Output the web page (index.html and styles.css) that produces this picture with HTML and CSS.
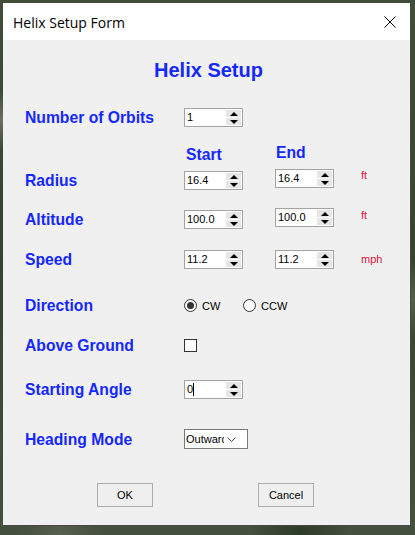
FILE: index.html
```html
<!DOCTYPE html>
<html lang="en">
<head>
    <meta charset="UTF-8">
    <meta name="viewport" content="width=device-width, initial-scale=1.0">
    <title>Helix Setup Form</title>
    <link rel="stylesheet" href="styles.css">
</head>
<body>
    <div class="window">
        <div class="titlebar">
            <span class="title">Helix Setup Form</span>
            <svg class="close" width="12" height="12" viewBox="0 0 12 12">
                <path d="M0.5 0.5 L11.5 11.5 M11.5 0.5 L0.5 11.5" stroke="#000" stroke-width="1" fill="none"/>
            </svg>
        </div>
        <div class="form">
            <h1 class="heading">Helix Setup</h1>

            <div class="row row-orbits">
                <span class="label">Number of Orbits</span>
                <div class="spin">
                    <span class="spin-value">1</span>
                    <span class="spin-btns"><span class="spin-up"></span><span class="spin-down"></span></span>
                </div>
            </div>

            <div class="row row-head">
                <span class="label"></span>
                <span class="col-head col-start">Start</span>
                <span class="col-head col-end">End</span>
            </div>

            <div class="row row-radius">
                <span class="label">Radius</span>
                <div class="col-start">
                    <div class="spin">
                        <span class="spin-value">16.4</span>
                        <span class="spin-btns"><span class="spin-up"></span><span class="spin-down"></span></span>
                    </div>
                </div>
                <div class="col-end up2">
                    <div class="spin">
                        <span class="spin-value">16.4</span>
                        <span class="spin-btns"><span class="spin-up"></span><span class="spin-down"></span></span>
                    </div>
                </div>
                <span class="unit up2">ft</span>
            </div>

            <div class="row row-altitude">
                <span class="label">Altitude</span>
                <div class="col-start">
                    <div class="spin">
                        <span class="spin-value">100.0</span>
                        <span class="spin-btns"><span class="spin-up"></span><span class="spin-down"></span></span>
                    </div>
                </div>
                <div class="col-end up2">
                    <div class="spin">
                        <span class="spin-value">100.0</span>
                        <span class="spin-btns"><span class="spin-up"></span><span class="spin-down"></span></span>
                    </div>
                </div>
                <span class="unit up1">ft</span>
            </div>

            <div class="row row-speed">
                <span class="label">Speed</span>
                <div class="col-start">
                    <div class="spin">
                        <span class="spin-value">11.2</span>
                        <span class="spin-btns"><span class="spin-up"></span><span class="spin-down"></span></span>
                    </div>
                </div>
                <div class="col-end">
                    <div class="spin">
                        <span class="spin-value">11.2</span>
                        <span class="spin-btns"><span class="spin-up"></span><span class="spin-down"></span></span>
                    </div>
                </div>
                <span class="unit">mph</span>
            </div>

            <div class="row row-direction">
                <span class="label">Direction</span>
                <span class="radio-item first">
                    <span class="radio checked"></span>CW
                </span>
                <span class="radio-item">
                    <span class="radio"></span>CCW
                </span>
            </div>

            <div class="row row-ground">
                <span class="label">Above Ground</span>
                <span class="checkbox"></span>
            </div>

            <div class="row row-angle">
                <span class="label">Starting Angle</span>
                <div class="spin">
                    <span class="spin-value">0<span class="caret"></span></span>
                    <span class="spin-btns"><span class="spin-up"></span><span class="spin-down"></span></span>
                </div>
            </div>

            <div class="row row-heading">
                <span class="label">Heading Mode</span>
                <div class="select">
                    <span class="select-value">Outward</span>
                    <svg class="chevron" width="9" height="5" viewBox="0 0 9 5">
                        <path d="M0.5 0.5 L4.5 4.5 L8.5 0.5" stroke="#444" stroke-width="1" fill="none"/>
                    </svg>
                </div>
            </div>

            <div class="buttons">
                <button class="btn">OK</button>
                <button class="btn">Cancel</button>
            </div>
        </div>
    </div>
</body>
</html>
```

FILE: styles.css
```css
body {
    margin: 0;
    width: 415px;
    height: 535px;
    overflow: hidden;
    font-family: "Liberation Sans", Arial, sans-serif;
    background-color: #3d4838;
    background-image:
        radial-gradient(circle at 2px 120px, #6b7060 0, transparent 30px),
        radial-gradient(circle at 60px 535px, #58604e 0, transparent 40px),
        radial-gradient(circle at 300px 535px, #2c3a28 0, transparent 50px),
        radial-gradient(circle at 413px 300px, #55604c 0, transparent 40px),
        linear-gradient(180deg, #414c3b, #36432f 50%, #46503f);
    padding: 3px 0 0 3px;
    box-sizing: border-box;
}
.window {
    width: 408px;
    height: 523px;
    box-sizing: border-box;
    border-right: 1px solid #474747;
    border-bottom: 1px solid #474747;
    background: #f0f0f0;
    display: flex;
    flex-direction: column;
}
.titlebar {
    height: 37px;
    background: #fff;
    display: flex;
    align-items: center;
    justify-content: space-between;
    padding: 0 14px 0 10px;
    flex-shrink: 0;
}
.title {
    font-family: "Open Sans", "Noto Sans", sans-serif;
    font-size: 14px;
    color: #000;
    margin-top: 1px;
}
.close {
    display: block;
    margin-top: 1px;
}
.form {
    padding-left: 22px;
    display: flex;
    flex-direction: column;
}
.heading {
    margin: 18px 0 0 0;
    height: 24px;
    line-height: 24px;
    font-size: 20px;
    font-weight: bold;
    color: #1428ff;
    text-align: center;
    padding-left: 4px;
    margin-right: 22px;
}
.row {
    display: flex;
    align-items: center;
    height: 19px;
}
.label {
    width: 159px;
    flex-shrink: 0;
    font-size: 15.7px;
    line-height: 19px;
    font-weight: bold;
    color: #1428ff;
}
.row-orbits { margin-top: 26px; }
.row-head { margin-top: 18px; }
.row-radius { margin-top: 7px; }
.row-altitude { margin-top: 20px; }
.row-speed { margin-top: 21px; }
.row-direction { margin-top: 27px; }
.row-ground { margin-top: 21px; }
.row-angle { margin-top: 25px; }
.row-heading { margin-top: 30px; height: 20px; }

.col-start {
    width: 91px;
    flex-shrink: 0;
}
.col-end {
    width: 86px;
    flex-shrink: 0;
}
.col-head {
    font-size: 15.7px;
    line-height: 19px;
    font-weight: bold;
    color: #1428ff;
}
.col-head.col-start { padding-left: 2px; box-sizing: border-box; }
.col-head.col-end { padding-left: 1px; box-sizing: border-box; align-self: flex-start; margin-top: -2px; }

.up2 { align-self: flex-start; margin-top: -2px; }
.up1 { align-self: flex-start; margin-top: -1px; }

.spin {
    width: 59px;
    height: 19px;
    box-sizing: border-box;
    border: 1px solid #a3a3a3;
    background: #fff;
    display: flex;
    align-items: stretch;
}
.spin-value {
    flex: 1;
    font-size: 11px;
    line-height: 17px;
    padding-left: 2px;
    color: #000;
}
.caret {
    display: inline-block;
    width: 1px;
    height: 13px;
    background: #000;
    vertical-align: -3px;
}
.spin-btns {
    width: 15px;
    margin: 1px 1px 1px 0;
    display: flex;
    flex-direction: column;
    gap: 1px;
}
.spin-up, .spin-down {
    flex: 1;
    background: #e6e6e6;
    display: flex;
    align-items: center;
    justify-content: center;
}
.spin-up::after {
    content: "";
    border-left: 4px solid transparent;
    border-right: 4px solid transparent;
    border-bottom: 4px solid #000;
}
.spin-down::after {
    content: "";
    border-left: 4px solid transparent;
    border-right: 4px solid transparent;
    border-top: 4px solid #000;
}
.unit {
    font-size: 11px;
    line-height: 13px;
    color: #dc143c;
}

.radio-item {
    display: flex;
    align-items: center;
    gap: 5px;
    font-size: 11px;
    color: #000;
}
.radio-item.first { width: 59px; }
.radio {
    width: 13px;
    height: 13px;
    box-sizing: border-box;
    border: 1px solid #333;
    border-radius: 50%;
    background: #fff;
    display: flex;
    align-items: center;
    justify-content: center;
}
.radio.checked::after {
    content: "";
    width: 7px;
    height: 7px;
    border-radius: 50%;
    background: #333;
}
.checkbox {
    width: 13px;
    height: 13px;
    box-sizing: border-box;
    border: 1px solid #333;
    background: #fff;
}

.select {
    width: 64px;
    height: 20px;
    box-sizing: border-box;
    border: 1px solid #7a7a7a;
    background: #fff;
    display: flex;
    align-items: center;
}
.select-value {
    width: 38px;
    overflow: hidden;
    white-space: nowrap;
    font-size: 11px;
    padding-left: 1px;
    color: #000;
}
.chevron {
    display: block;
    margin-left: 3px;
}

.buttons {
    margin-top: 34px;
    display: flex;
    gap: 105px;
    padding-left: 72px;
}
.btn {
    width: 56px;
    height: 24px;
    box-sizing: border-box;
    border: 1px solid #adadad;
    background: #efefef;
    font-family: "Liberation Sans", Arial, sans-serif;
    font-size: 11px;
    color: #000;
    padding: 0;
}
```
